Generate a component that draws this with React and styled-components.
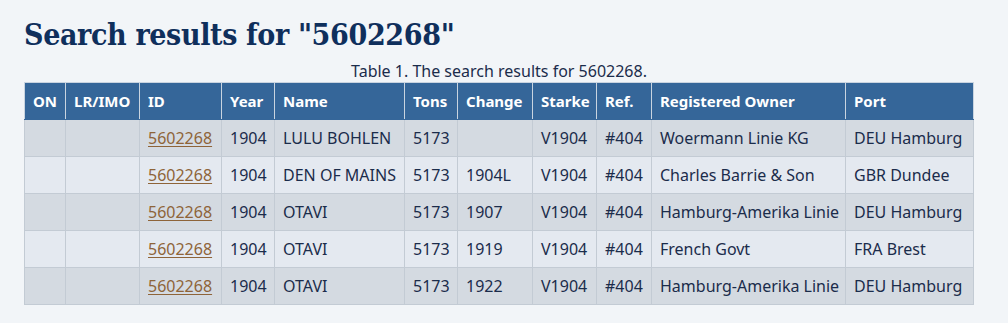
import React from "react";
import styled, { createGlobalStyle } from "styled-components";

const Global = createGlobalStyle`
  html, body { margin: 0; padding: 0; background: #f2f5f8; }
  body { font-family: "Noto Sans", "Open Sans", sans-serif; color: #1b2c4b; }
`;

const Page = styled.div`
  padding: 12px 24px 18px 24px;
`;

const Heading = styled.h1`
  margin: 0 0 3px 0;
  font-family: "DejaVu Serif Condensed", "DejaVu Serif", serif;
  font-stretch: condensed;
  font-weight: bold;
  font-size: 30px;
  line-height: 46px;
  color: #0f2f5c;
  letter-spacing: -0.35px;
`;

const Table = styled.table`
  border-collapse: collapse;
  table-layout: fixed;
  font-size: 16px;
  width: 949px;
`;

const Caption = styled.caption`
  font-size: 16px;
  line-height: 20px;
  text-align: center;
  color: #1b2c4b;
  padding-bottom: 1px;
`;

const Col = styled.col`
  width: ${(p) => p.$w}px;
`;

const Th = styled.th`
  background: #356699;
  color: #ffffff;
  font-weight: bold;
  font-size: 15px;
  text-align: left;
  padding: 6px 8px;
  line-height: 24px;
  border: 1px solid #c9d4e0;
  border-bottom-color: #356699;
  white-space: nowrap;
  overflow: hidden;
`;

const Tr = styled.tr`
  background: ${(p) => (p.$odd ? "#d4dae1" : "#e4e9f0")};
`;

const Td = styled.td`
  padding: 6px 8px;
  line-height: 24px;
  border: 1px solid #c3cbd4;
  white-space: nowrap;
  overflow: hidden;
  text-align: left;
`;

const IdLink = styled.a`
  color: #8e6439;
  text-decoration: underline;
  text-underline-offset: 2px;
`;

const cols = [
  ["ON", 41],
  ["LR/IMO", 74],
  ["ID", 82],
  ["Year", 53],
  ["Name", 130],
  ["Tons", 53],
  ["Change", 75],
  ["Starke", 64],
  ["Ref.", 55],
  ["Registered Owner", 194],
  ["Port", 128],
];

const rows = [
  ["LULU BOHLEN", "", "Woermann Linie KG", "DEU Hamburg"],
  ["DEN OF MAINS", "1904L", "Charles Barrie & Son", "GBR Dundee"],
  ["OTAVI", "1907", "Hamburg-Amerika Linie", "DEU Hamburg"],
  ["OTAVI", "1919", "French Govt", "FRA Brest"],
  ["OTAVI", "1922", "Hamburg-Amerika Linie", "DEU Hamburg"],
];

export default function App() {
  return (
    <Page>
      <Global />
      <Heading>Search results for "5602268"</Heading>
      <Table>
        <Caption>Table 1. The search results for 5602268.</Caption>
        <colgroup>
          {cols.map(([c, w]) => (
            <Col key={c} $w={w} />
          ))}
        </colgroup>
        <thead>
          <tr>
            {cols.map(([c]) => (
              <Th key={c}>{c}</Th>
            ))}
          </tr>
        </thead>
        <tbody>
          {rows.map((r, i) => (
            <Tr key={i} $odd={i % 2 === 0}>
              <Td />
              <Td />
              <Td><IdLink href="#">5602268</IdLink></Td>
              <Td>1904</Td>
              <Td>{r[0]}</Td>
              <Td>5173</Td>
              <Td>{r[1]}</Td>
              <Td>V1904</Td>
              <Td>#404</Td>
              <Td>{r[2]}</Td>
              <Td>{r[3]}</Td>
            </Tr>
          ))}
        </tbody>
      </Table>
    </Page>
  );
}
